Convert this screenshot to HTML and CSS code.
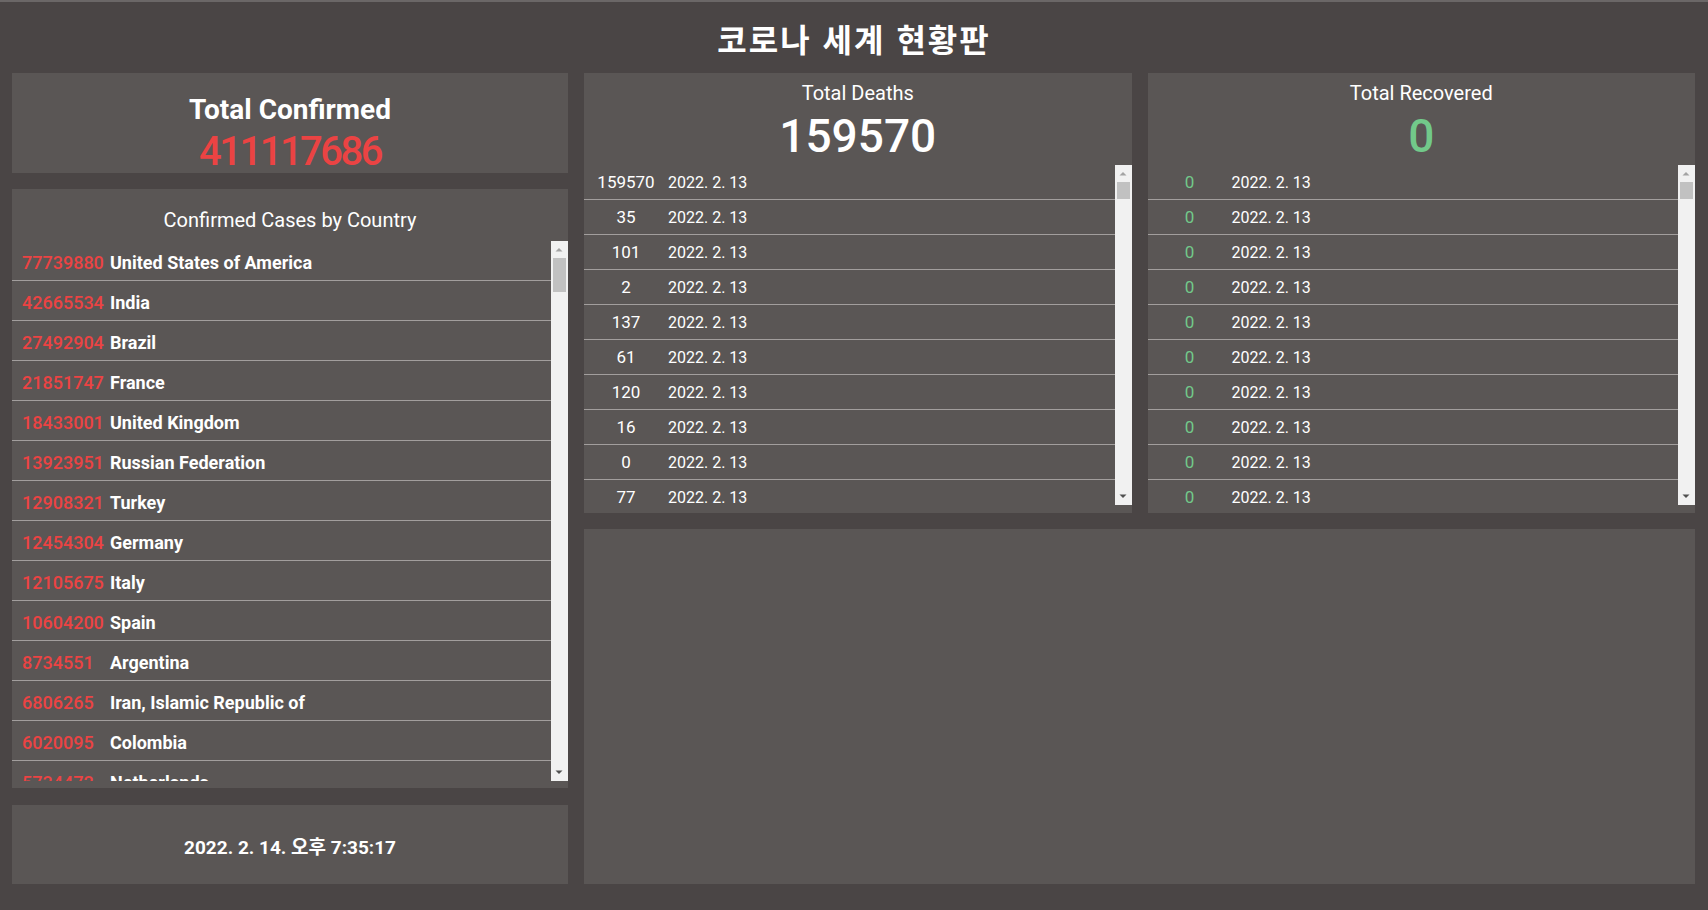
FILE: index.html
```html
<!DOCTYPE html>
<html lang="ko">
<head>
<meta charset="utf-8">
<title>코로나 세계 현황판</title>
<link rel="stylesheet" href="styles.css">
</head>
<body>
<header class="top">
  <h1 class="page-title">코로나 세계 현황판</h1>
</header>
<main class="dash">
  <section class="left-col">
    <div class="card total-card">
      <h2 class="total-title">Total Confirmed</h2>
      <div class="total-number red">411117686</div>
    </div>
    <div class="card country-card">
      <h2 class="card-title">Confirmed Cases by Country</h2>
      <div class="scroll-box">
        <ul class="list country-list">
          <li class="country-row"><span class="c-num red">77739880</span><span class="c-name">United States of America</span></li>
          <li class="country-row"><span class="c-num red">42665534</span><span class="c-name">India</span></li>
          <li class="country-row"><span class="c-num red">27492904</span><span class="c-name">Brazil</span></li>
          <li class="country-row"><span class="c-num red">21851747</span><span class="c-name">France</span></li>
          <li class="country-row"><span class="c-num red">18433001</span><span class="c-name">United Kingdom</span></li>
          <li class="country-row"><span class="c-num red">13923951</span><span class="c-name">Russian Federation</span></li>
          <li class="country-row"><span class="c-num red">12908321</span><span class="c-name">Turkey</span></li>
          <li class="country-row"><span class="c-num red">12454304</span><span class="c-name">Germany</span></li>
          <li class="country-row"><span class="c-num red">12105675</span><span class="c-name">Italy</span></li>
          <li class="country-row"><span class="c-num red">10604200</span><span class="c-name">Spain</span></li>
          <li class="country-row"><span class="c-num red">8734551</span><span class="c-name">Argentina</span></li>
          <li class="country-row"><span class="c-num red">6806265</span><span class="c-name">Iran, Islamic Republic of</span></li>
          <li class="country-row"><span class="c-num red">6020095</span><span class="c-name">Colombia</span></li>
          <li class="country-row"><span class="c-num red">5734472</span><span class="c-name">Netherlands</span></li>
        </ul>
        <div class="vbar">
          <span class="vbar-btn"><svg width="17" height="17" viewBox="0 0 17 17"><polygon points="4.5,10.5 11.5,10.5 8,7" fill="#a3a3a3"/></svg></span>
          <span class="vbar-track"><span class="vbar-thumb thumb-long"></span></span>
          <span class="vbar-btn"><svg width="17" height="17" viewBox="0 0 17 17"><polygon points="4.5,6.5 11.5,6.5 8,10" fill="#505050"/></svg></span>
        </div>
      </div>
    </div>
    <div class="card time-card">2022. 2. 14. 오후 7:35:17</div>
  </section>
  <section class="right-col">
    <div class="card stat-card">
      <h2 class="stat-title">Total Deaths</h2>
      <div class="stat-number">159570</div>
      <div class="scroll-box">
        <ul class="list stat-list">
          <li class="stat-row"><span class="s-num">159570</span><span class="s-date">2022. 2. 13</span></li>
          <li class="stat-row"><span class="s-num">35</span><span class="s-date">2022. 2. 13</span></li>
          <li class="stat-row"><span class="s-num">101</span><span class="s-date">2022. 2. 13</span></li>
          <li class="stat-row"><span class="s-num">2</span><span class="s-date">2022. 2. 13</span></li>
          <li class="stat-row"><span class="s-num">137</span><span class="s-date">2022. 2. 13</span></li>
          <li class="stat-row"><span class="s-num">61</span><span class="s-date">2022. 2. 13</span></li>
          <li class="stat-row"><span class="s-num">120</span><span class="s-date">2022. 2. 13</span></li>
          <li class="stat-row"><span class="s-num">16</span><span class="s-date">2022. 2. 13</span></li>
          <li class="stat-row"><span class="s-num">0</span><span class="s-date">2022. 2. 13</span></li>
          <li class="stat-row"><span class="s-num">77</span><span class="s-date">2022. 2. 13</span></li>
        </ul>
        <div class="vbar">
          <span class="vbar-btn"><svg width="17" height="17" viewBox="0 0 17 17"><polygon points="4.5,10.5 11.5,10.5 8,7" fill="#a3a3a3"/></svg></span>
          <span class="vbar-track"><span class="vbar-thumb thumb-short"></span></span>
          <span class="vbar-btn"><svg width="17" height="17" viewBox="0 0 17 17"><polygon points="4.5,6.5 11.5,6.5 8,10" fill="#505050"/></svg></span>
        </div>
      </div>
    </div>
    <div class="card stat-card">
      <h2 class="stat-title">Total Recovered</h2>
      <div class="stat-number green">0</div>
      <div class="scroll-box">
        <ul class="list stat-list">
          <li class="stat-row"><span class="s-num green">0</span><span class="s-date">2022. 2. 13</span></li>
          <li class="stat-row"><span class="s-num green">0</span><span class="s-date">2022. 2. 13</span></li>
          <li class="stat-row"><span class="s-num green">0</span><span class="s-date">2022. 2. 13</span></li>
          <li class="stat-row"><span class="s-num green">0</span><span class="s-date">2022. 2. 13</span></li>
          <li class="stat-row"><span class="s-num green">0</span><span class="s-date">2022. 2. 13</span></li>
          <li class="stat-row"><span class="s-num green">0</span><span class="s-date">2022. 2. 13</span></li>
          <li class="stat-row"><span class="s-num green">0</span><span class="s-date">2022. 2. 13</span></li>
          <li class="stat-row"><span class="s-num green">0</span><span class="s-date">2022. 2. 13</span></li>
          <li class="stat-row"><span class="s-num green">0</span><span class="s-date">2022. 2. 13</span></li>
          <li class="stat-row"><span class="s-num green">0</span><span class="s-date">2022. 2. 13</span></li>
        </ul>
        <div class="vbar">
          <span class="vbar-btn"><svg width="17" height="17" viewBox="0 0 17 17"><polygon points="4.5,10.5 11.5,10.5 8,7" fill="#a3a3a3"/></svg></span>
          <span class="vbar-track"><span class="vbar-thumb thumb-short"></span></span>
          <span class="vbar-btn"><svg width="17" height="17" viewBox="0 0 17 17"><polygon points="4.5,6.5 11.5,6.5 8,10" fill="#505050"/></svg></span>
        </div>
      </div>
    </div>
    <div class="card chart-card"></div>
  </section>
</main>
</body>
</html>
```

FILE: styles.css
```css
* { box-sizing: border-box; }

html, body {
  margin: 0;
  padding: 0;
}

body {
  background: #4a4545;
  border-top: 2px solid #6b6767;
  color: #ffffff;
  font-family: Roboto, "Noto Sans CJK KR", sans-serif;
  height: 910px;
  overflow: hidden;
}

.top {
  height: 71px;
  display: flex;
  align-items: center;
  justify-content: center;
}

.page-title {
  margin: 0;
  font-family: "Noto Sans CJK KR", sans-serif;
  font-size: 32px;
  line-height: 1;
  font-weight: 700;
  letter-spacing: 2px;
}

.dash {
  display: grid;
  grid-template-columns: 556px 1fr;
  column-gap: 16px;
  padding: 0 13px 0 12px;
  height: 811px;
}

.card {
  background: #5a5655;
}

.red { color: #eb4343; }
.green { color: #72c98a; }

/* left column */
.left-col {
  display: flex;
  flex-direction: column;
}

.total-card {
  height: 100px;
  padding-top: 21px;
  text-align: center;
}

.total-title {
  margin: 0;
  font-size: 28px;
  line-height: 32px;
  font-weight: 700;
}

.total-number {
  margin-top: 6px;
  font-size: 40px;
  line-height: 40px;
  font-weight: 500;
  letter-spacing: -2.5px;
}

.country-card {
  margin-top: 16px;
  height: 599px;
  padding-bottom: 7px;
  display: flex;
  flex-direction: column;
}

.card-title {
  margin: 0;
  padding-top: 10px;
  font-size: 20px;
  line-height: 42px;
  font-weight: 400;
  text-align: center;
}

/* scroll box with its scrollbar */
.scroll-box {
  flex: 1;
  min-height: 0;
  display: flex;
}

.list {
  flex: 1;
  min-width: 0;
  list-style: none;
  margin: 0;
  padding: 0;
  overflow: hidden;
}

.vbar {
  width: 17px;
  flex: none;
  background: #f1f1f1;
  display: flex;
  flex-direction: column;
}

.vbar-btn {
  height: 17px;
  display: flex;
  flex: none;
}

.vbar-track {
  flex: 1;
  padding: 0 2px;
}

.vbar-thumb {
  display: block;
  background: #c1c1c1;
}

.thumb-long { height: 34px; }
.thumb-short { height: 17px; }

.country-row {
  display: grid;
  grid-template-columns: 84px 1fr;
  column-gap: 4px;
  height: 40px;
  padding: 5px 0 0 10px;
  border-bottom: 1px solid #a29e9d;
  font-size: 18px;
  line-height: 34px;
  white-space: nowrap;
}

.c-num { font-weight: 500; }
.c-name { font-weight: 700; }

.time-card {
  margin-top: 17px;
  height: 79px;
  display: flex;
  align-items: center;
  justify-content: center;
  font-size: 19px;
  font-weight: 700;
  padding-top: 2px;
}

/* right area */
.right-col {
  display: grid;
  grid-template-columns: 1fr 1fr;
  grid-template-rows: 440px 355px;
  gap: 16px;
}

.stat-card {
  display: flex;
  flex-direction: column;
  padding: 6px 0 8px;
  text-align: center;
}

.stat-title {
  margin: 0;
  font-size: 20px;
  line-height: 28px;
  font-weight: 400;
}

.stat-number {
  font-size: 46px;
  line-height: 58px;
  font-weight: 500;
}

.stat-row {
  display: grid;
  grid-template-columns: 84px 1fr;
  height: 35px;
  border-bottom: 1px solid #a29e9d;
  line-height: 35px;
  text-align: left;
}

.s-num {
  font-size: 17px;
  text-align: center;
}

.s-date {
  font-size: 16px;
}

.chart-card {
  grid-column: 1 / -1;
}
```
